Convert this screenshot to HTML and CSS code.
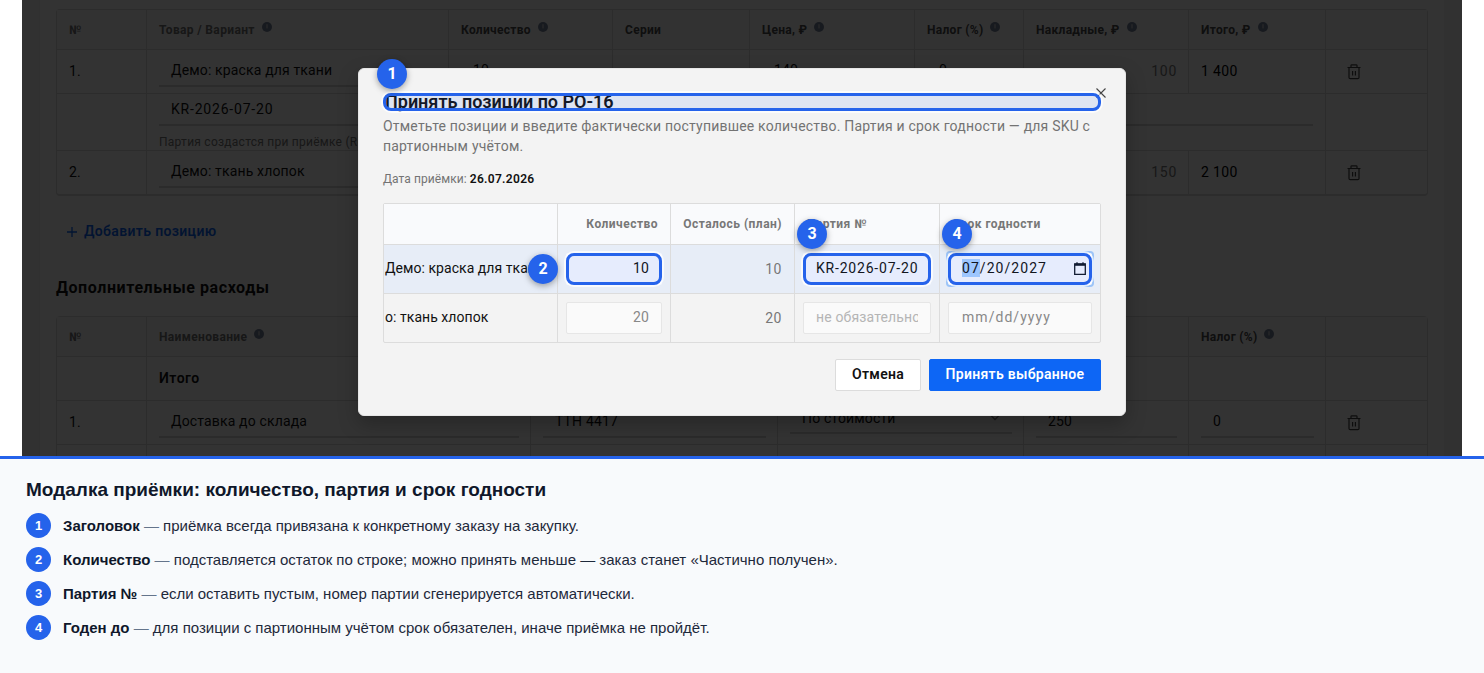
FILE: index.html
```
<!DOCTYPE html>
<html lang="ru">
<head>
    <meta charset="UTF-8">
    <meta name="viewport" content="width=device-width, initial-scale=1.0">
    <title>Модалка приёмки</title>
    <link rel="stylesheet" href="styles.css">
</head>
<body>
    <svg width="0" height="0" class="sprite">
        <symbol id="trash" viewBox="0 0 14 16">
            <path d="M0.5 3.5h13M4 3.2V1.6q0-.8.8-.8h4.4q.8 0 .8.8v1.6M2 3.8v9.7q0 1.2 1.2 1.2h7.6q1.2 0 1.2-1.2V3.8M5.6 7v4.5M8.4 7v4.5" fill="none" stroke="currentColor" stroke-width="1.2"/>
        </symbol>
        <symbol id="info" viewBox="0 0 10 10">
            <circle cx="5" cy="5" r="5" fill="#75829a"/>
            <path d="M5 2.2v4.2" stroke="#ddd" stroke-width="1"/>
        </symbol>
    </svg>

    <div class="shot">
        <div class="panel">
            <div class="table items">
                <div class="cell head">№</div>
                <div class="cell head">Товар / Вариант <svg class="info"><use href="#info"/></svg></div>
                <div class="cell head dark">Количество <svg class="info"><use href="#info"/></svg></div>
                <div class="cell head dark">Серии</div>
                <div class="cell head dark">Цена, ₽ <svg class="info"><use href="#info"/></svg></div>
                <div class="cell head dark">Налог (%) <svg class="info"><use href="#info"/></svg></div>
                <div class="cell head dark">Накладные, ₽ <svg class="info"><use href="#info"/></svg></div>
                <div class="cell head dark">Итого, ₽ <svg class="info"><use href="#info"/></svg></div>
                <div class="cell head"></div>

                <div class="cell">1.</div>
                <div class="cell"><div class="field">Демо: краска для ткани</div></div>
                <div class="cell"><div class="field">10</div></div>
                <div class="cell"></div>
                <div class="cell"><div class="field">140</div></div>
                <div class="cell"><div class="field">0</div></div>
                <div class="cell muted">100</div>
                <div class="cell sum">1 400</div>
                <div class="cell action"><svg class="trash"><use href="#trash"/></svg></div>

                <div class="cell"></div>
                <div class="cell batch">
                    <div class="field latin">KR-2026-07-20</div>
                    <div class="hint">Партия создастся при приёмке (REC)</div>
                </div>
                <div class="cell"></div>

                <div class="cell">2.</div>
                <div class="cell"><div class="field">Демо: ткань хлопок</div></div>
                <div class="cell"><div class="field"></div></div>
                <div class="cell"></div>
                <div class="cell"><div class="field"></div></div>
                <div class="cell"><div class="field"></div></div>
                <div class="cell muted">150</div>
                <div class="cell sum">2 100</div>
                <div class="cell action"><svg class="trash"><use href="#trash"/></svg></div>
            </div>

            <div class="add">
                <svg class="plus" viewBox="0 0 10 10"><path d="M5 0v10M0 5h10" stroke="currentColor" stroke-width="1.3"/></svg>
                Добавить позицию
            </div>

            <h3 class="section-title">Дополнительные расходы</h3>

            <div class="table costs">
                <div class="cell head">№</div>
                <div class="cell head">Наименование <svg class="info"><use href="#info"/></svg></div>
                <div class="cell head"></div>
                <div class="cell head"></div>
                <div class="cell head"></div>
                <div class="cell head dark">Налог (%) <svg class="info"><use href="#info"/></svg></div>
                <div class="cell head"></div>

                <div class="cell"></div>
                <div class="cell total">Итого</div>
                <div class="cell"></div>
                <div class="cell"></div>
                <div class="cell"></div>
                <div class="cell"></div>
                <div class="cell"></div>

                <div class="cell">1.</div>
                <div class="cell"><div class="field">Доставка до склада</div></div>
                <div class="cell"><div class="field">ТТН 4417</div></div>
                <div class="cell">
                    <div class="field select">По стоимости
                        <svg class="chevron" viewBox="0 0 10 6"><path d="M1 .5l4 4 4-4" fill="none" stroke="currentColor" stroke-width="1.3"/></svg>
                    </div>
                </div>
                <div class="cell"><div class="field">250</div></div>
                <div class="cell"><div class="field">0</div></div>
                <div class="cell action"><svg class="trash"><use href="#trash"/></svg></div>

                <div class="cell"></div>
                <div class="cell"></div>
                <div class="cell"></div>
                <div class="cell"></div>
                <div class="cell"></div>
                <div class="cell"></div>
                <div class="cell"></div>
            </div>
        </div>

        <div class="overlay">
            <div class="modal">
                <svg class="close" viewBox="0 0 10 10"><path d="M.5.5l9 9M9.5.5l-9 9" stroke="#444" stroke-width="1.1"/></svg>
                <div class="modal-head">
                    <h2 class="modal-title">Принять позиции по PO-16</h2>
                    <span class="mark"></span>
                    <span class="badge badge-title">1</span>
                </div>
                <p class="modal-text">Отметьте позиции и введите фактически поступившее количество. Партия и срок годности — для SKU с партионным учётом.</p>
                <p class="modal-date">Дата приёмки: <b>26.07.2026</b></p>

                <div class="receive">
                    <div class="rcell rhead"></div>
                    <div class="rcell rhead right">Количество</div>
                    <div class="rcell rhead right">Осталось (план)</div>
                    <div class="rcell rhead">Партия №</div>
                    <div class="rcell rhead">Срок годности</div>

                    <div class="rcell active name"><span>Демо: краска для ткани</span></div>
                    <div class="rcell active slot">
                        <div class="input right">10<span class="mark"></span><span class="badge badge-left">2</span></div>
                    </div>
                    <div class="rcell active right plan">10</div>
                    <div class="rcell active slot">
                        <div class="input latin"><span class="clip">KR-2026-07-20</span><span class="mark"></span><span class="badge badge-top">3</span></div>
                    </div>
                    <div class="rcell active slot">
                        <div class="input date focus">
                            <span><span class="selected">07</span>/20/2027</span>
                            <svg class="calendar" viewBox="0 0 12 13"><path d="M.7 2h10.6v10.3H.7zM3 .2V2M9 .2V2" fill="none" stroke="#111827" stroke-width="1.3"/><path d="M.7 1.6h10.6v2.2H.7z" fill="#111827"/></svg>
                            <span class="mark"></span><span class="badge badge-top">4</span>
                        </div>
                    </div>

                    <div class="rcell name second"><span>о: ткань хлопок</span></div>
                    <div class="rcell slot"><div class="input right disabled">20</div></div>
                    <div class="rcell right plan">20</div>
                    <div class="rcell slot"><div class="input disabled placeholder"><span class="clip">не обязательно</span></div></div>
                    <div class="rcell slot"><div class="input date disabled"><span>mm/dd/yyyy</span></div></div>
                </div>

                <div class="buttons">
                    <button class="btn cancel">Отмена</button>
                    <button class="btn primary">Принять выбранное</button>
                </div>
            </div>
        </div>
    </div>

    <div class="legend">
        <h1 class="legend-title">Модалка приёмки: количество, партия и срок годности</h1>
        <div class="legend-item"><span class="num">1</span><p><b>Заголовок</b> <i>—</i> приёмка всегда привязана к конкретному заказу на закупку.</p></div>
        <div class="legend-item"><span class="num">2</span><p><b>Количество</b> <i>—</i> подставляется остаток по строке; можно принять меньше — заказ станет «Частично получен».</p></div>
        <div class="legend-item"><span class="num">3</span><p><b>Партия №</b> <i>—</i> если оставить пустым, номер партии сгенерируется автоматически.</p></div>
        <div class="legend-item"><span class="num">4</span><p><b>Годен до</b> <i>—</i> для позиции с партионным учётом срок обязателен, иначе приёмка не пройдёт.</p></div>
    </div>
</body>
</html>
```
FILE: styles.css
```
* {
    box-sizing: border-box;
}
body {
    margin: 0;
    height: 673px;
    overflow: hidden;
    background: #f8fafc;
    font-family: "Liberation Sans", Arial, sans-serif;
}
h1, h2, h3, p {
    margin: 0;
}
.sprite {
    position: absolute;
}

/* Page under the modal */
.shot {
    position: relative;
    height: 456px;
    padding: 0 22px;
    background: #fff;
    overflow: hidden;
    font-family: Roboto, sans-serif;
    font-size: 14px;
    letter-spacing: 0.15px;
    color: #111;
}
.panel {
    height: 456px;
    padding: 9px 16px 0 17px;
    background: #fff;
    border: solid #f3f3f3;
    border-width: 0 18px 0 17px;
    box-shadow: inset 1px 0 #f0f0f0;
}
.table {
    display: grid;
    width: 1372px;
    border: 1px solid #dadada;
    border-radius: 4px;
}
.items {
    grid-template-columns: 90px 302px 164px 137px 165px 109px 165px 137px 101px;
    grid-template-rows: 40px 44px 57px 43px;
    border-bottom-width: 2px;
}
.costs {
    grid-template-columns: 90px 384px 247px 246px 165px 137px 101px;
    grid-template-rows: 40px 44px 44px 44px;
}
.cell {
    display: flex;
    align-items: center;
    min-width: 0;
    padding: 0 11px 1px 12px;
    border-right: 1px solid #dadada;
    border-bottom: 1px solid #dadada;
    white-space: nowrap;
}
.items .cell:nth-child(9),
.items .cell:nth-child(18),
.items .cell:nth-child(21),
.items .cell:nth-child(30),
.costs .cell:nth-child(7n) {
    border-right: 0;
}
.items .cell:nth-child(n+22) {
    border-bottom: 0;
}
.head {
    align-items: flex-start;
    padding-top: 12px;
    font-size: 12px;
    line-height: 16px;
    font-weight: 700;
    letter-spacing: 0.35px;
    color: #737373;
    background: #fafafa;
}
.head.dark {
    letter-spacing: 0.3px;
    color: #4a4a4a;
}
.info {
    width: 10px;
    height: 10px;
    margin: 0 0 0 7px;
}
.field {
    display: flex;
    align-items: center;
    width: 100%;
    height: 32px;
    padding: 0 12px;
    border-bottom: 2px solid #d6d6d6;
}
.latin {
    letter-spacing: 0.8px;
}
.select {
    justify-content: space-between;
    align-self: flex-start;
    height: 33px;
    padding-top: 2px;
}
.chevron {
    width: 10px;
    height: 6px;
    color: #777;
}
.batch {
    grid-column: 2 / 9;
    display: block;
    padding-right: 12px;
}
.hint {
    padding-top: 8px;
    font-size: 12px;
    line-height: 16px;
    letter-spacing: 0.25px;
    color: #777;
}
.muted {
    justify-content: flex-end;
    letter-spacing: 0.7px;
    color: #777;
}
.sum {
    letter-spacing: 0.35px;
    color: #000;
}
.action {
    padding-left: 21px;
}
.trash {
    width: 14px;
    height: 16px;
    margin-top: 1px;
    color: #444;
}
.add {
    display: flex;
    align-items: center;
    gap: 7px;
    height: 20px;
    margin: 25px 0 0 11px;
    font-weight: 600;
    letter-spacing: 0.35px;
    color: #0d66f5;
}
.plus {
    width: 10px;
    height: 10px;
    margin-top: 2px;
}
.section-title {
    margin: 37px 0 18px;
    font-size: 16px;
    line-height: 20px;
    font-weight: 700;
    letter-spacing: 0.58px;
}
.total {
    padding-bottom: 2px;
    font-weight: 600;
    letter-spacing: 0.5px;
}

/* Receive modal */
.overlay {
    position: absolute;
    inset: 0 22px;
    display: flex;
    justify-content: center;
    align-items: flex-start;
    padding-top: 68px;
    background: rgba(0, 0, 0, 0.8);
}
.modal {
    position: relative;
    width: 768px;
    height: 348px;
    padding: 24px;
    border: 1px solid #e6e6e6;
    border-radius: 6px;
    background: #f3f3f3;
    box-shadow: 0 8px 20px rgba(0, 0, 0, 0.25);
}
.close {
    position: absolute;
    top: 19px;
    right: 19px;
    width: 10px;
    height: 10px;
}
.modal-head {
    position: relative;
    height: 18px;
}
.modal-title {
    font-size: 18px;
    line-height: 18px;
    font-weight: 600;
    letter-spacing: 0;
    padding-left: 2px;
}
.mark {
    position: absolute;
    inset: 0;
    border: 3px solid #2563eb;
    border-radius: 8px;
    background: rgba(37, 99, 235, 0.1);
    box-shadow: 0 0 0 2px rgba(255, 255, 255, 0.7);
}
.input .mark {
    background: rgba(37, 99, 235, 0.06);
}
.badge {
    position: absolute;
    width: 30px;
    height: 30px;
    border-radius: 50%;
    background: #2563eb;
    box-shadow: 0 2px 6px rgba(0, 0, 0, 0.35);
    color: #fff;
    font-size: 16px;
    line-height: 29px;
    font-weight: 700;
    text-align: center;
    letter-spacing: 0;
    z-index: 2;
}
.badge-title {
    left: -6px;
    top: -34px;
}
.badge-left {
    left: -38px;
    top: 1px;
}
.badge-top {
    left: -6px;
    top: -34px;
}
.modal-text {
    margin-top: 5px;
    line-height: 20px;
    letter-spacing: 0.2px;
    color: #737373;
}
.modal-date {
    margin-top: 14px;
    font-size: 12px;
    line-height: 18px;
    letter-spacing: 0.07px;
    color: #737373;
}
.modal-date b {
    font-weight: 600;
    letter-spacing: 0.3px;
    color: #111;
}
.receive {
    display: grid;
    grid-template-columns: 174px 113px 124px 145px 160px;
    grid-template-rows: 41px 49px 48px;
    margin-top: 15px;
    border: 1px solid #dcdcdc;
    border-radius: 2px;
}
.rcell {
    display: flex;
    align-items: center;
    min-width: 0;
    padding: 0 12px;
    border-right: 1px solid #dcdcdc;
    border-bottom: 1px solid #dcdcdc;
    white-space: nowrap;
}
.rcell:nth-child(5n) {
    border-right: 0;
}
.rcell:nth-child(n+11) {
    border-bottom: 0;
}
.rhead {
    background: #f9fafc;
    font-size: 12px;
    font-weight: 700;
    letter-spacing: 0.47px;
    color: #777;
}
.right {
    justify-content: flex-end;
}
.active {
    background: #e7edf7;
}
.name {
    padding: 0 0 2px 1px;
    overflow: hidden;
    letter-spacing: 0.05px;
}
.plan {
    padding-bottom: 1px;
    letter-spacing: 0.5px;
    color: #777;
}
.slot {
    padding: 0 8px;
}
.input {
    position: relative;
    display: flex;
    align-items: center;
    width: 100%;
    height: 32px;
    padding: 0 13px 2px;
    border-radius: 2px;
    background: #f3f5fe;
}
.input.right {
    justify-content: flex-end;
}
.clip {
    overflow: hidden;
}
.date {
    padding-left: 14px;
    letter-spacing: 1.05px;
}
.focus {
    box-shadow: 0 0 0 2px #9cc4f8;
}
.selected {
    padding: 1px 0;
    background: #a5cdff;
}
.calendar {
    width: 12px;
    height: 13px;
    margin-left: auto;
    margin-right: -7px;
}
.disabled {
    border: 1px solid #e6e6e6;
    padding: 0 12px 2px;
    background: #fafafa;
    color: #888;
}
.date.disabled {
    padding-left: 13px;
}
.placeholder {
    color: #b5b5b5;
}
.buttons {
    display: flex;
    justify-content: flex-end;
    gap: 8px;
    margin-top: 16px;
}
.btn {
    height: 32px;
    padding: 0 0 2px;
    border: 1px solid #dcdcdc;
    border-radius: 2px;
    font: 600 14px Roboto, sans-serif;
    letter-spacing: 0.3px;
}
.cancel {
    width: 86px;
    background: #fff;
    color: #111;
}
.primary {
    width: 172px;
    border-color: #0d66f5;
    background: #0d66f5;
    color: #fff;
}

/* Legend */
.legend {
    height: 217px;
    padding: 20px 26px;
    border-top: 3px solid #2563eb;
    background: #f8fafc;
    color: #1e293b;
}
.legend-title {
    margin-bottom: 12px;
    font-size: 19px;
    line-height: 22px;
    color: #0f172a;
}
.legend-item {
    display: flex;
    align-items: center;
    gap: 12px;
    height: 25px;
    margin-bottom: 9px;
    font-size: 15px;
}
.legend-item b {
    color: #0f172a;
}
.legend-item i {
    font-style: normal;
    color: #64748b;
}
.num {
    width: 25px;
    height: 25px;
    border-radius: 50%;
    background: #2563eb;
    color: #fff;
    font-size: 13px;
    line-height: 25px;
    font-weight: 700;
    text-align: center;
}
```
